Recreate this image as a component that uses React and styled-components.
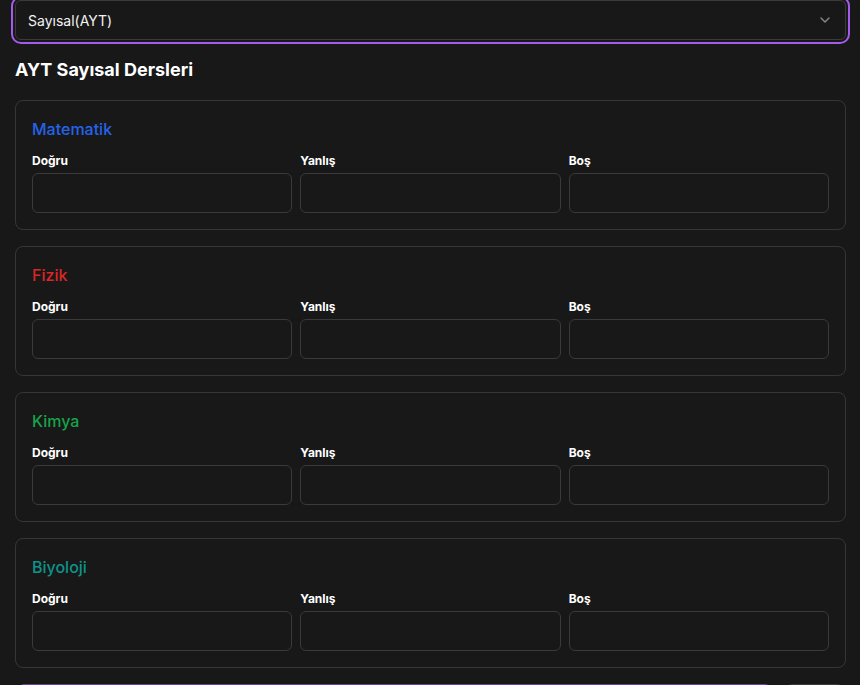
import React, { useState } from 'react'
import styled, { createGlobalStyle } from 'styled-components'
import { ChevronDown } from 'lucide-react'

const GlobalStyle = createGlobalStyle`
    html, body {
        margin: 0;
        padding: 0;
        background-color: #181818;
        color: #fafafa;
        font-family: Inter, "Noto Sans", sans-serif;
        overflow: hidden;
    }
`

const Page = styled.div`
    padding: 0 14px 0 15px;
    display: flex;
    flex-direction: column;
`

const SelectBox = styled.div`
    height: 40px;
    box-sizing: border-box;
    border: 1px solid #3a3a3a;
    border-radius: 6px;
    background-color: #181818;
    box-shadow: 0 0 0 2px #181818, 0 0 0 4px #a25bea;
    display: flex;
    justify-content: space-between;
    align-items: center;
    padding: 0 12px;
    font-size: 14px;
    color: #f2f2f2;
`

const Heading = styled.h2`
    margin: 16px 0 16px 0;
    font-size: 18px;
    line-height: 28px;
    font-weight: 700;
    color: #ffffff;
`

const CardList = styled.div`
    display: flex;
    flex-direction: column;
    gap: 16px;
`

const Card = styled.div`
    border: 1px solid #363636;
    border-radius: 8px;
    padding: 16px;
`

const CardTitle = styled.h3`
    margin: 0 0 12px 0;
    font-size: 16px;
    line-height: 24px;
    font-weight: 500;
    color: ${props => props.color};
`

const FieldRow = styled.div`
    display: grid;
    grid-template-columns: repeat(3, 1fr);
    gap: 8px;
`

const Field = styled.div`
    display: flex;
    flex-direction: column;
    gap: 4px;
`

const Label = styled.label`
    font-size: 12px;
    line-height: 16px;
    font-weight: 700;
    color: #ffffff;
`

const Input = styled.input`
    height: 40px;
    box-sizing: border-box;
    border: 1px solid #3a3a3a;
    border-radius: 6px;
    background-color: #181818;
    color: #fafafa;
    padding: 0 12px;
    font-family: inherit;
    font-size: 14px;
    outline: none;
`

// only the top edge of these shows in the frame
const ButtonRow = styled.div`
    display: flex;
    gap: 15px;
    margin: 16px 3px 0 3px;
`

const Button = styled.button`
    height: 40px;
    border: none;
    border-radius: 6px;
    background-color: ${props => props.primary ? '#6b3fa3' : '#3a3a3a'};
    flex: ${props => props.primary ? 1 : '0 0 57px'};
`

const subjects = [
    { name: 'Matematik', color: '#2563eb' },
    { name: 'Fizik', color: '#dc2626' },
    { name: 'Kimya', color: '#16a34a' },
    { name: 'Biyoloji', color: '#0d9488' },
]

export default function App() {

    const [ values, setValues ] = useState({})

    const update = (key, v) => setValues({ ...values, [key]: v })

    return (
        <Page>
            <GlobalStyle />
            <SelectBox>
                Sayısal(AYT)
                <ChevronDown size={16} color="#8a8a8a" />
            </SelectBox>
            <Heading>AYT Sayısal Dersleri</Heading>
            <CardList>
                {
                    subjects.map(s => (
                        <Card key={s.name}>
                            <CardTitle color={s.color}>{s.name}</CardTitle>
                            <FieldRow>
                                {['Doğru', 'Yanlış', 'Boş'].map(f => (
                                    <Field key={f}>
                                        <Label>{f}</Label>
                                        <Input
                                            type="number"
                                            value={values[s.name + f] || ''}
                                            onChange={e => update(s.name + f, e.target.value)}
                                        />
                                    </Field>
                                ))}
                            </FieldRow>
                        </Card>
                    ))
                }
            </CardList>
            <ButtonRow>
                <Button primary aria-label="Hesapla" />
                <Button aria-label="Sıfırla" />
            </ButtonRow>
        </Page>
    )
}
